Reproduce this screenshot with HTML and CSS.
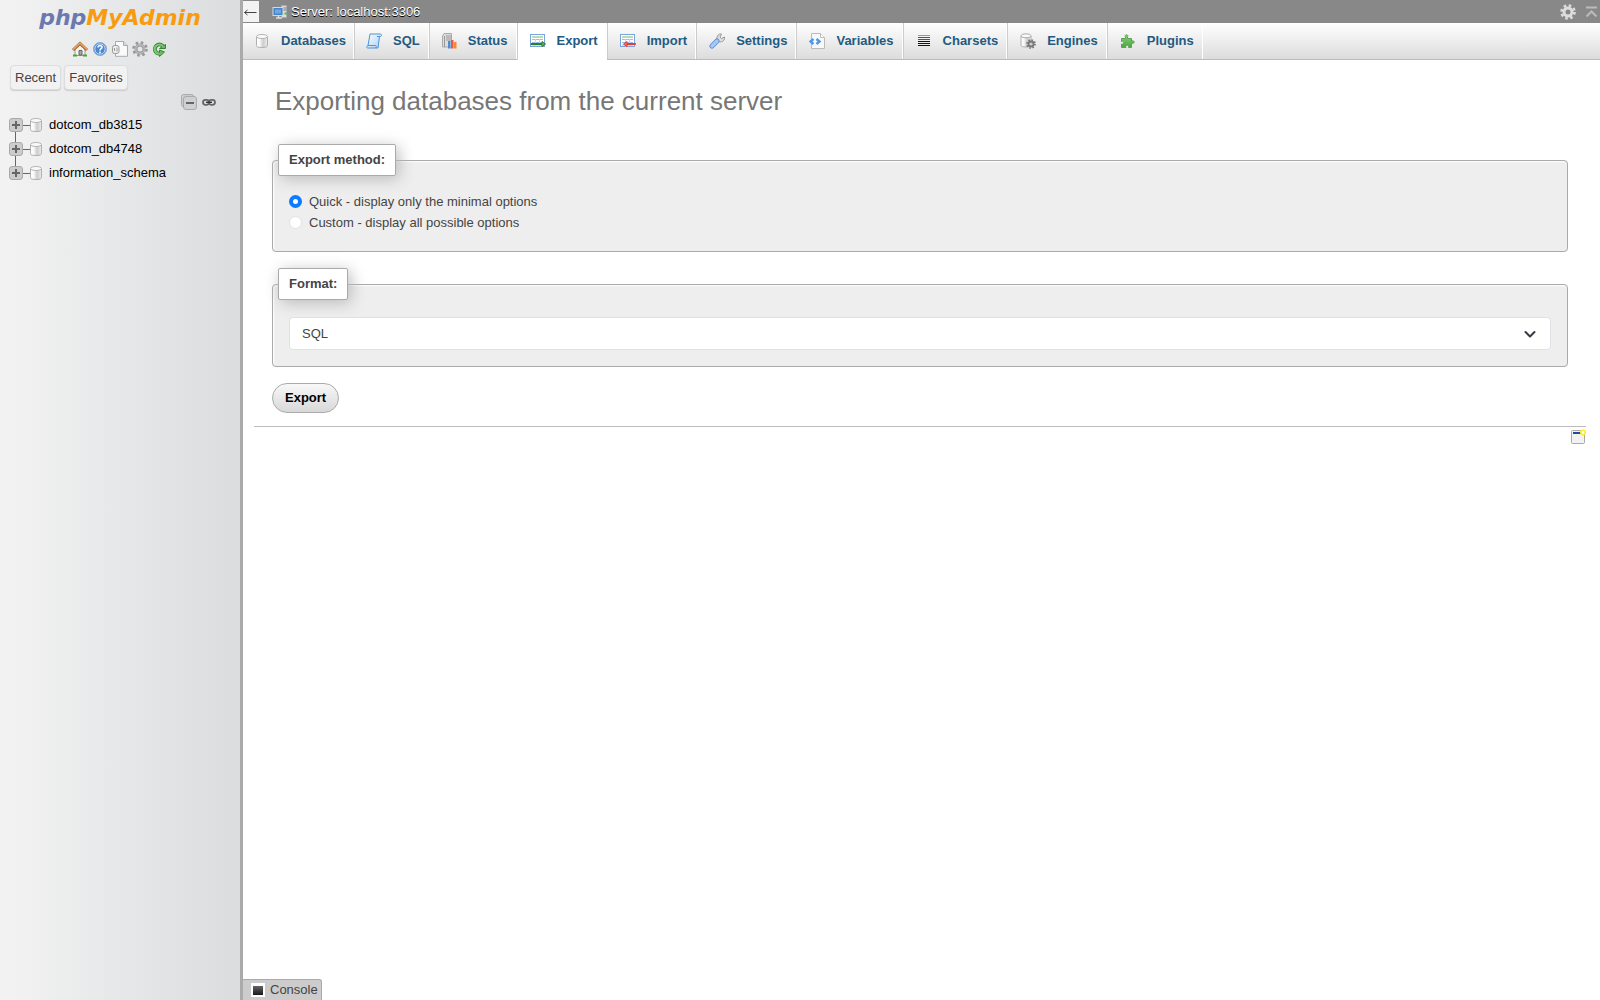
FILE: index.html
```html
<!DOCTYPE html>
<html lang="en">
<head>
<meta charset="utf-8">
<title>localhost:3306 | phpMyAdmin</title>
<link rel="stylesheet" href="styles.css">
</head>
<body>
<svg class="defs" aria-hidden="true">
  <defs>
    <linearGradient id="metal"><stop offset="0" stop-color="#fff"/><stop offset=".3" stop-color="#f8f8f8"/><stop offset=".6" stop-color="#ccc"/><stop offset="1" stop-color="#eee"/></linearGradient>
    <linearGradient id="dark" x2="0" y2="1"><stop offset="0" stop-color="#777"/><stop offset="1" stop-color="#111"/></linearGradient>
    <linearGradient id="blue" x2="1" y2="1"><stop offset="0" stop-color="#fff"/><stop offset="1" stop-color="#a8d0f5"/></linearGradient>
    <linearGradient id="green" x2="0" y2="1"><stop offset="0" stop-color="#8bd17f"/><stop offset="1" stop-color="#4ea444"/></linearGradient>
    <symbol id="db" viewBox="0 0 16 16"><path d="M2.500 4v8.500c0 1.500 2 2 5.500 2s5.500-.5 5.500-2V4z" fill="url(#metal)" stroke="#b0b0b0"/><ellipse cx="8" cy="3.500" rx="5.500" ry="2" fill="#fafafa" stroke="#b5b5b5"/></symbol>
    <symbol id="gear" viewBox="0 0 16 16"><circle cx="8" cy="8" r="6.500" fill="none" stroke="currentColor" stroke-width="2.600" stroke-dasharray="2.550 2.550"/><circle cx="8" cy="8" r="4" fill="none" stroke="currentColor" stroke-width="3"/></symbol>
    <symbol id="plus" viewBox="0 0 14 14"><rect x=".5" y=".5" width="13" height="13" rx="2.500" fill="#ccc" stroke="#aaa"/><path d="M3 7h8M7 3v8" stroke="#666" stroke-width="2"/></symbol>
    <symbol id="table" viewBox="0 0 16 16"><rect x=".5" y="1.500" width="14" height="12" fill="#fff" stroke="#7aa5dc"/><path d="M2 4h11" stroke="#75b865"/><path d="M2 6.500h11M2 9.500h11M2 12h11" stroke="#9bbde8"/><path d="M5.500 6v7M9.500 6v7" stroke="#c4d8f0"/></symbol>
  </defs>
</svg>
<div class="app">
  <aside class="sidebar">
    <a class="logo" href="#"><span class="php">php</span>MyAdmin</a>
    <nav class="shortcuts" aria-label="Shortcuts">
      <a href="#" aria-label="Home"><svg class="icon" viewBox="0 0 16 16"><path d="M3 8v6.500h10V8L8 3.500z" fill="#f4f4ee" stroke="#999"/><path d="M7 14V9.500h3V14z" fill="#aaa" stroke="#666"/><path d="M1 9l7-6.500L15 9" fill="none" stroke="#9a5525" stroke-width="3"/><path d="M1 8.500l7-6.300 7 6.300" fill="none" stroke="#e3a061" stroke-width="1.800"/><path d="M1 14.500h4M11 14.500h4" stroke="#4da32f" stroke-width="2"/></svg></a>
      <a href="#" aria-label="Help"><svg class="icon" viewBox="0 0 16 16"><circle cx="8" cy="8" r="6.500" fill="#4b87cf" stroke="#8aa9d2"/><circle cx="8" cy="8" r="5.200" fill="none" stroke="#c2dafa"/><path d="M6 6.500C6 3.800 10.300 4 10 6.400 9.800 7.700 8 7.700 8 9.500M8 10.500v1.700" fill="none" stroke="#fff" stroke-width="1.600"/></svg></a>
      <a href="#" aria-label="Documentation"><svg class="icon" viewBox="0 0 16 16"><path d="M3.500.5h8l4 4v10.800h-12z" fill="#fafafa" stroke="#aaa"/><path d="M11.500.5v4h4" fill="#ddd" stroke="#aaa"/><rect x=".5" y="4.500" width="6.500" height="8" rx="2" fill="#eee" stroke="#999"/><path d="M2.500 7v3M5 6.500v4" stroke="#999"/></svg></a>
      <a href="#" aria-label="Panel settings"><svg class="icon gear" viewBox="0 0 16 16"><use href="#gear"/><circle cx="8" cy="8" r="4.300" fill="none" stroke="#bbb" stroke-width="1.400"/></svg></a>
      <a href="#" aria-label="Reload"><svg class="icon" viewBox="0 0 16 16"><path d="M11.500 6A4.600 4.600 0 1 0 8 12.700" fill="none" stroke="#388536" stroke-width="3.800"/><path d="M7.500 9v6.500L12.500 11z" fill="#6abb62" stroke="#388536"/><path d="M7.500 7.500h6v-4z" fill="#6abb62" stroke="#388536"/><path d="M11.300 5.700A4.600 4.600 0 1 0 8 12.700" fill="none" stroke="#7cc876" stroke-width="2"/></svg></a>
    </nav>
    <div class="lists"><button class="list-btn">Recent</button><button class="list-btn">Favorites</button></div>
    <div class="tree-tools">
      <a href="#" aria-label="Collapse all"><svg class="icon" viewBox="0 0 16 16"><rect x=".5" y=".5" width="12" height="12" rx="2" fill="#ccc" stroke="#aaa"/><rect x="2.500" y="2.500" width="13" height="13" rx="2.500" fill="#d0d0d0" stroke="#aaa"/><path d="M5 9h8" stroke="#666" stroke-width="2"/></svg></a>
      <a href="#" aria-label="Link with main panel"><svg class="icon" viewBox="0 0 16 16"><rect x="2" y="5.800" width="6" height="5" rx="2.500" fill="none" stroke="#666" stroke-width="1.800"/><rect x="8" y="5.800" width="6" height="5" rx="2.500" fill="none" stroke="#666" stroke-width="1.800"/><path d="M5 8.300h6" stroke="#333" stroke-width="1.400"/></svg></a>
    </div>
    <ul class="tree">
      <li><button class="expand" aria-label="Expand"><svg viewBox="0 0 14 14"><use href="#plus"/></svg></button><span class="branch"></span><svg class="db" viewBox="0 0 16 16"><use href="#db"/></svg><a href="#">dotcom_db3815</a></li>
      <li><button class="expand" aria-label="Expand"><svg viewBox="0 0 14 14"><use href="#plus"/></svg></button><span class="branch"></span><svg class="db" viewBox="0 0 16 16"><use href="#db"/></svg><a href="#">dotcom_db4748</a></li>
      <li><button class="expand" aria-label="Expand"><svg viewBox="0 0 14 14"><use href="#plus"/></svg></button><span class="branch"></span><svg class="db" viewBox="0 0 16 16"><use href="#db"/></svg><a href="#">information_schema</a></li>
    </ul>
  </aside>
  <div class="main">
    <header class="serverbar">
      <button class="collapse" aria-label="Hide panel"><svg class="icon" viewBox="0 0 16 16"><path d="M1.500 8.500h12M4.500 6l-3 2.500 3 2.500" fill="none" stroke="#444"/></svg></button>
      <a class="server" href="#"><svg class="icon" viewBox="0 0 16 16"><path d="M9.500 1.500h5v12h-5z" fill="#ddd" stroke="#aaa"/><path d="M11 4h3M11 6h3" stroke="#777"/><path d="M12.500 9.500h2" stroke="#4b4" stroke-width="2"/><rect x="1" y="3.500" width="10" height="8" fill="#4384cf" stroke="#d8d8d8"/><path d="M3 5.500h6v4H3z" fill="#6ea7e2"/><path d="M4 14h6M6.500 12v2" stroke="#ddd" stroke-width="1.500"/></svg>Server: localhost:3306</a>
      <a class="page-settings" href="#" aria-label="Page settings"><svg class="icon" viewBox="0 0 16 16"><use href="#gear"/></svg></a>
      <a class="top" href="#" aria-label="Scroll to top"><svg class="icon" viewBox="0 0 16 16"><path d="M2 3.500h11M2.500 12.500l5-5 5 5" fill="none" stroke="#bbb" stroke-width="2"/></svg></a>
    </header>
    <nav class="tabs" aria-label="Server">
      <a href="#"><svg class="icon" viewBox="0 0 16 16"><use href="#db"/></svg>Databases</a>
      <a href="#"><svg class="icon" viewBox="0 0 16 16"><path d="M4 1h10.500c1.500.5 1 2.500 0 2.500h-1L12 15H2C0 15 .5 12.500 2 12.500z" fill="url(#blue)" stroke="#4e93d8"/><path d="M13.500 3.500H11M2 12.500h7.500c1 0 1 2 0 2.500" fill="none" stroke="#4e93d8"/></svg>SQL</a>
      <a href="#"><svg class="icon" viewBox="0 0 16 16"><path d="M3 .5h7.500v13.500h-9V3z" fill="#ddd" stroke="#aaa"/><path d="M5 3h5M5 5h5M5 7h5M3.500 3v11" stroke="#999"/><path d="M7 8h2.500v7.500H7z" fill="#4e8bd5"/><path d="M10 7h2.500v8.500H10z" fill="#ee5548"/><path d="M13 9h2.500v6.500H13z" fill="#f28a2e"/></svg>Status</a>
      <a href="#" class="active" aria-current="page"><svg class="icon" viewBox="0 0 16 16"><use href="#table"/><path d="M1 10.500h11V8.500l3.500 2.500L12 13.500v-2H1z" fill="#69af5d" stroke="#2f7d2c"/></svg>Export</a>
      <a href="#"><svg class="icon" viewBox="0 0 16 16"><use href="#table"/><path d="M15.500 10.500H7V8.500L3.500 11 7 13.500v-2h8.500z" fill="#f66" stroke="#e63c35"/></svg>Import</a>
      <a href="#"><svg class="icon" viewBox="0 0 16 16"><path d="M8 6.500c-.5-4 2-6 4.500-5.500L11 4l1.500 1.500L15.500 4c.5 3-2 5.500-5 4.800z" fill="#ddd" stroke="#999"/><path d="M8 8L3 13" stroke="#5c88cf" stroke-width="5" stroke-linecap="round"/><path d="M8 8L3 13" stroke="#a9c7f2" stroke-width="3.400" stroke-linecap="round"/></svg>Settings</a>
      <a href="#"><svg class="icon" viewBox="0 0 16 16"><path d="M2.500.5h9l4 4v11h-13z" fill="#f8f8f8" stroke="#bbb"/><path d="M11.500.5v4h4" fill="#fff" stroke="#bbb"/><path d="M4.500 6L1.500 8.500l3 2.500M7.500 6l3 2.500-3 2.500" fill="none" stroke="#4c98e8" stroke-width="2.400"/></svg>Variables</a>
      <a href="#"><svg class="icon" viewBox="0 0 16 16"><path d="M2 2.500h12" stroke="#999"/><path d="M2 4.500h12M2 6.500h12" stroke="#555"/><path d="M2 8.500h12M2 10.500h12M2 12.500h12" stroke="#111"/></svg>Charsets</a>
      <a href="#"><svg class="icon" viewBox="0 0 16 16"><path d="M1 3v9c0 1.500 2 2 5 2s5-.5 5-2V3z" fill="url(#metal)" stroke="#b0b0b0"/><ellipse cx="6" cy="2.800" rx="5" ry="2" fill="#fafafa" stroke="#aaa"/><svg class="small-gear" x="6" y="6" width="10" height="10"><use href="#gear"/></svg></svg>Engines</a>
      <a href="#"><svg class="icon" viewBox="0 0 16 16"><path d="M1.500 5.500h4V4C4 1 9 1 7.500 4v1.500h4V8c3-1.500 4 3.500 0 2v4.500H8.500c1-3-4-3-2.500 0H1.500v-3.500c3 1 3-3.500 0-2.500z" fill="url(#green)" stroke="#5aa64e"/></svg>Plugins</a>
    </nav>
    <main class="content">
      <h2>Exporting databases from the current server</h2>
      <form>
        <fieldset>
          <legend>Export method:</legend>
          <label class="choice"><input type="radio" name="method" checked>Quick - display only the minimal options</label>
          <label class="choice"><input type="radio" name="method">Custom - display all possible options</label>
        </fieldset>
        <fieldset class="format">
          <legend>Format:</legend>
          <div class="picker">
            <select aria-label="Format"><option>SQL</option></select>
            <svg viewBox="0 0 16 16" aria-hidden="true"><path d="M3.500 6L8 10.500 12.500 6" fill="none" stroke="#343a40" stroke-width="2" stroke-linecap="round" stroke-linejoin="round"/></svg>
          </div>
        </fieldset>
        <button class="submit">Export</button>
      </form>
    </main>
    <footer class="selflink">
      <a href="#" aria-label="Open new phpMyAdmin window"><svg class="icon" viewBox="0 0 16 16"><rect x="1.500" y="1.500" width="13" height="13" rx="1" fill="#f2f2f2" stroke="#aaa"/><path d="M3 4h8" stroke="#1d4d9b" stroke-width="2"/><circle cx="13" cy="3.500" r="2.200" fill="#fff" stroke="#ffeb27" stroke-width="1.600"/></svg></a>
    </footer>
    <button class="console"><svg class="icon" viewBox="0 0 16 16"><rect x="2" y="2" width="12" height="12" fill="url(#dark)" stroke="#fff" stroke-width="2"/><path d="M2 3h12" stroke="#fff" stroke-width="2"/></svg>Console</button>
  </div>
</div>
</body>
</html>
```
FILE: styles.css
```css
* { box-sizing: border-box; }
body { margin: 0; background: #fff; color: #444; font: 13px/20px "Liberation Sans", Arial, sans-serif; }
a { color: inherit; text-decoration: none; }
button, select { font: inherit; color: inherit; }
svg { display: block; flex: none; }
.defs { position: absolute; width: 0; height: 0; }
.icon { width: 16px; height: 16px; }
.app { display: flex; min-height: 100vh; }

.sidebar { width: 243px; flex: none; border-right: 3px solid #aaa; background: linear-gradient(to right, #f3f3f3, #dadcde); }
.logo { display: block; height: 40px; padding-top: 4px; text-align: center; color: #f89c0e; font: italic 700 22px/28px "DejaVu Sans", sans-serif; }
.php { color: #6c78af; }
.shortcuts { display: flex; justify-content: center; gap: 4px; padding-top: 1px; }
.gear { color: #999; }
.lists { display: flex; gap: 3px; padding: 8px 10px 0; }
.list-btn { height: 25px; padding: 0 4px; border: 1px solid #ddd; border-radius: 4px; background: #f2f2f2; box-shadow: 0 1px 1px #ccc; }
.tree-tools { display: flex; justify-content: flex-end; gap: 4px; padding: 4px 23px 0 0; }
.tree { margin: 3px 0 0; padding: 0 0 0 9px; list-style: none; color: #000; }
.tree li { display: flex; align-items: center; height: 24px; }
.tree li:not(:last-child) { background: linear-gradient(#666, #666) 6px 12px / 1px 12px no-repeat; }
.tree li:not(:first-child) .expand { background: linear-gradient(#666, #666) 6px 0 / 1px 12px no-repeat; }
.expand { width: 14px; height: 24px; padding: 0; border: 0; background: none; }
.expand svg { width: 14px; height: 14px; }
.branch { width: 7px; height: 1px; margin-right: -2px; background: #666; }
.db { width: 16px; height: 16px; margin-right: 5px; }

.main { flex: 1; display: flex; flex-direction: column; min-width: 0; }
.serverbar { display: flex; align-items: center; height: 23px; background: #888; color: #fff; text-shadow: 0 1px 0 #000; }
.collapse { width: 16px; height: 21px; padding: 0; border: 0; background: #f3f3f3; }
.server { display: flex; align-items: center; gap: 3px; padding-left: 13px; }
.page-settings { margin-left: auto; color: #ddd; }
.top { padding-left: 8px; }
.tabs { display: flex; height: 37px; border-bottom: 1px solid #bbb; background: linear-gradient(#fff, #dcdcdc); }
.tabs a { display: flex; align-items: center; gap: 11px; height: 36px; padding: 0 8px 0 12px; border-right: 1px solid #fff; border-left: 1px solid #ccc; color: #235a81; font-weight: 700; }
.tabs a:first-child { border-left: 0; padding-left: 12px; padding-right: 7px; }
.tabs a:nth-child(-n+3) { padding-left: 11px; }
.tabs .active { height: 37px; padding-bottom: 1px; background: #fff; }
.small-gear { color: #777; }

.content { padding: 25px 32px 13px 29px; }
h2 { margin: 0 0 27px; padding-left: 3px; color: #777; font-size: 26px; line-height: 32px; font-weight: 400; }
fieldset { min-width: 0; margin: 0 0 16px; padding: 15px 16px 18px; border: 1px solid #aaa; border-radius: 4px; background: #eee; box-shadow: inset 1px 1px 2px #fff; }
legend { height: 32px; margin-left: -11px; padding: 5px 10px; border: 1px solid #aaa; border-radius: 2px; background: #fff; box-shadow: 3px 3px 15px #bbb; font-weight: 700; }
.choice { display: flex; align-items: center; gap: 7px; height: 21px; }
input[type="radio"] { appearance: none; width: 13px; height: 13px; margin: 0; border: 1px solid #dee2e6; border-radius: 50%; background: #fff; }
input[type="radio"]:checked { border: 4px solid #0d7bff; }
.format { padding-top: 17px; padding-bottom: 16px; }
.picker { display: grid; align-items: center; }
.picker > * { grid-area: 1 / 1; }
.picker svg { width: 16px; height: 16px; margin-right: 13px; justify-self: end; pointer-events: none; }
select { appearance: none; width: 100%; height: 33px; padding: 0 12px; border: 1px solid #dee2e6; border-radius: 4px; background: #fff; }
.submit { height: 30px; padding: 0 12px; border: 1px solid #aaa; border-radius: 15px; background: linear-gradient(#f8f8f8, #d8d8d8); color: #000; font-weight: 700; display: block; }
.selflink { display: flex; justify-content: flex-end; margin: 0 14px 0 11px; padding-top: 2px; border-top: 1px solid #bbb; }
.console { display: flex; align-items: center; align-self: flex-start; gap: 4px; height: 21px; margin-top: auto; padding: 0 3px 0 7px; border: 1px solid #aaa; border-width: 1px 1px 0 0; border-radius: 0 3px 0 0; background: #ccc; }
```
